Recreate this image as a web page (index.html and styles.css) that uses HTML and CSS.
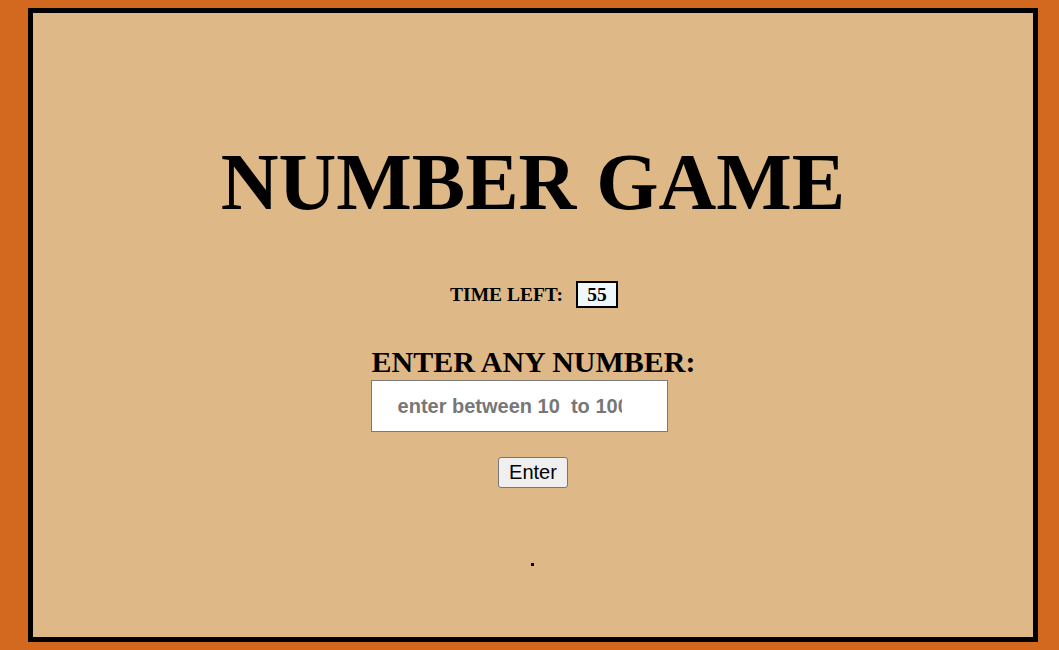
FILE: index.html
```html
<!DOCTYPE html>
<html>
<head>
<meta charset="utf-8">
<link rel="stylesheet" href="styles.css">
</head>
<body>
<div class="frame">
  <h1 class="title">NUMBER GAME</h1>
  <div class="timer">
    <span class="timer-label">TIME LEFT:</span>
    <span class="timer-box">55</span>
  </div>
  <div class="entry">
    <label class="entry-label" for="num">ENTER ANY NUMBER:</label>
    <input class="entry-input" id="num" type="text" placeholder="enter between 10  to 100">
  </div>
  <button class="enter-btn" type="button">Enter</button>
  <div class="result"></div>
</div>
</body>
</html>
```

FILE: styles.css
```css
html, body {
  margin: 0;
  padding: 0;
}
body {
  background: #d2691e;
  padding: 8px 21px 8px 28px;
  font-family: "Liberation Serif", "Times New Roman", serif;
}
.frame {
  box-sizing: border-box;
  height: 634px;
  border: 5px solid #000;
  background: #deb887;
  display: flex;
  flex-direction: column;
  align-items: center;
}
.title {
  margin: 123px 0 0;
  font-size: 80px;
  line-height: 92px;
  font-weight: bold;
  color: #000;
}
.timer {
  margin-top: 53px;
  display: flex;
  align-items: center;
  gap: 13px;
  padding-left: 2px;
}
.timer-label {
  font-size: 19.5px;
  font-weight: bold;
}
.timer-box {
  box-sizing: border-box;
  width: 42px;
  height: 27px;
  border: 2px solid #000;
  background: #f0f8ff;
  font-size: 19.5px;
  font-weight: bold;
  text-align: center;
  line-height: 23px;
}
.entry {
  margin-top: 36px;
  display: flex;
  flex-direction: column;
  align-items: flex-start;
}
.entry-label {
  font-size: 30px;
  line-height: 36px;
  font-weight: bold;
  padding-left: 1px;
}
.entry-input {
  box-sizing: border-box;
  width: 297px;
  height: 52px;
  border: 1px solid #7a7a7a;
  background: #fff;
  padding: 0 45px 0 26px;
  font-family: "Liberation Sans", Arial, sans-serif;
  font-size: 20px;
  font-weight: bold;
  outline: none;
}
.entry-input::placeholder {
  color: #777;
}
.enter-btn {
  margin-top: 25px;
  font-family: "Liberation Sans", Arial, sans-serif;
  font-size: 20px;
  padding: 1px 8px;
  height: 31px;
  width: 70px;
  background: #efefef;
  border: 1px solid #767676;
  border-radius: 3px;
  color: #000;
}
.result {
  margin-top: 75px;
  width: 3px;
  height: 3px;
  background: #000;
  margin-left: -2px;
}
```
